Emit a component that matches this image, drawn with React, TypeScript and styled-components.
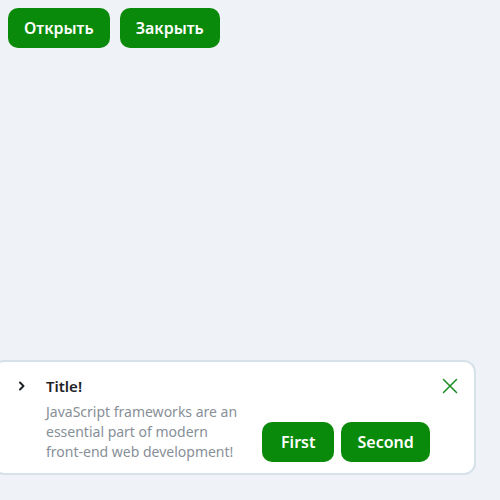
import React from "react";
import styled, { createGlobalStyle } from "styled-components";

const Global = createGlobalStyle`
  html, body { margin: 0; padding: 0; background: #eff3f7; }
  body { padding: 8px; font-family: "Noto Sans", "Open Sans", sans-serif; }
`;

const Toolbar = styled.div`
  display: flex;
  gap: 10px;
`;

const Button = styled.button<{ $pad?: number }>`
  height: 40px;
  padding: 0 ${(p) => p.$pad ?? 16}px;
  border: none;
  border-radius: 10px;
  background: #0a8a0b;
  color: #ffffff;
  font-family: "Noto Sans", sans-serif;
  font-size: 16px;
  font-weight: 600;
  cursor: pointer;
`;

const Toast = styled.div`
  position: fixed;
  left: -8px;
  bottom: 25px;
  width: 484px;
  box-sizing: border-box;
  background: #ffffff;
  border: 2px solid #d7e1e9;
  border-radius: 12px;
  padding: 14px 12px 11px 14px;
  display: flex;
  gap: 10px;
`;

const ChevronCol = styled.div`
  width: 28px;
  height: 20px;
  display: flex;
  align-items: center;
  justify-content: center;
  color: #1d2226;
`;

const Main = styled.div`
  flex: 1;
  display: flex;
  flex-direction: column;
  gap: 6px;
`;

const Header = styled.div`
  display: flex;
  justify-content: space-between;
  align-items: center;
  height: 20px;
`;

const Title = styled.div`
  font-size: 15px;
  line-height: 20px;
  font-weight: 600;
  color: #1f2328;
`;

const CloseButton = styled.button`
  width: 24px;
  height: 24px;
  padding: 0;
  border: none;
  background: transparent;
  display: flex;
  align-items: center;
  justify-content: center;
  color: #198a1f;
  cursor: pointer;
`;

const Body = styled.div`
  display: flex;
  align-items: flex-end;
  gap: 16px;
`;

const Description = styled.div`
  width: 200px;
  font-size: 14px;
  line-height: 20px;
  color: #878f98;
`;

const Actions = styled.div`
  display: flex;
  gap: 7px;
`;

export default function App() {
  return (
    <>
      <Global />
      <Toolbar>
        <Button>Открыть</Button>
        <Button>Закрыть</Button>
      </Toolbar>
      <Toast>
        <ChevronCol>
          <svg width="10" height="10" viewBox="0 0 10 10" fill="none">
            <path d="M3 1.5 L6.5 5 L3 8.5" stroke="currentColor" strokeWidth="2" strokeLinecap="round" strokeLinejoin="round" />
          </svg>
        </ChevronCol>
        <Main>
          <Header>
            <Title>Title!</Title>
            <CloseButton aria-label="close">
              <svg width="16" height="16" viewBox="0 0 16 16" fill="none">
                <path d="M1.5 1.5 L14.5 14.5 M14.5 1.5 L1.5 14.5" stroke="currentColor" strokeWidth="1.5" strokeLinecap="round" />
              </svg>
            </CloseButton>
          </Header>
          <Body>
            <Description>
              JavaScript frameworks are an essential part of modern front-end web development!
            </Description>
            <Actions>
              <Button $pad={19}>First</Button>
              <Button $pad={16}>Second</Button>
            </Actions>
          </Body>
        </Main>
      </Toast>
    </>
  );
}
